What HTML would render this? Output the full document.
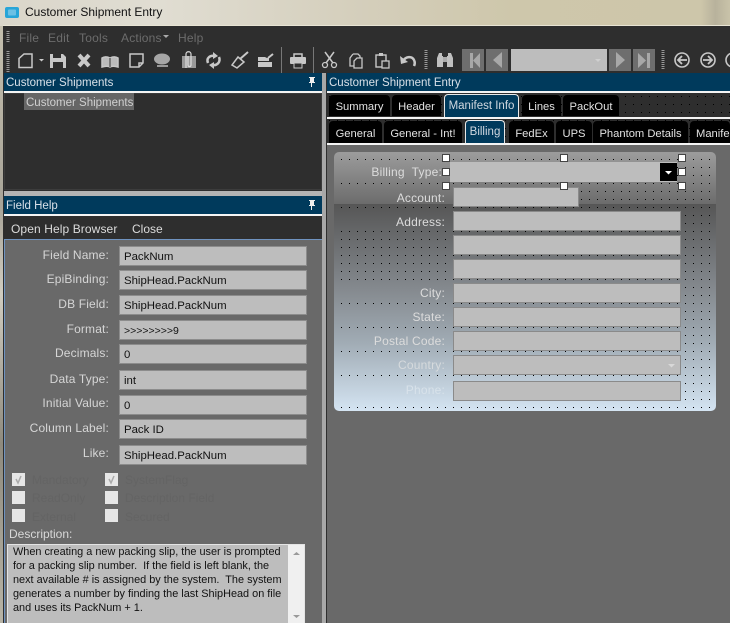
<!DOCTYPE html>
<html><head><meta charset="utf-8"><style>
html,body{margin:0;padding:0}
body{width:730px;height:623px;overflow:hidden;position:relative;background:#cdc6ab;font:11.5px "Liberation Sans",sans-serif;color:#d8d8d8}
div,span,svg{position:absolute}
.t{white-space:nowrap;line-height:14px}
.tab{background:#000;border-radius:4px 4px 0 0;height:21px;line-height:25px;text-align:center;color:#e2e2e2;white-space:nowrap;overflow:hidden;font-size:11.2px}
.r2{top:121px;height:22px;line-height:26px}
.sel{background:#003a5c;border:1px solid #e8e8e8;border-bottom:0;border-radius:4px 4px 0 0;box-sizing:border-box;line-height:22px;text-align:center;color:#d0d8e0;white-space:nowrap;font-size:11.5px}
.f{left:119px;width:188px;height:20px;background:#bdbdbd;border:1px solid #8c8c8c;box-sizing:border-box;color:#111;line-height:20px;padding-left:4px;white-space:nowrap;font-size:11.4px}
.l{left:0;width:109px;text-align:right;color:#d6d6d6;line-height:14px;white-space:nowrap;font-size:12px;letter-spacing:.15px}
.b{left:453px;width:228px;height:20px;background:#bdbdbd;border:1px solid #8a8a8a;box-sizing:border-box}
.c{width:13px;height:13px;background:#e6e6e6}
.k{color:#646464;white-space:nowrap;line-height:14px;font-size:12px}
.fl{left:339px;height:18px;width:109px;padding-right:3px;box-sizing:border-box;background-image:linear-gradient(#9c9c9c 0,#6c6c6c 52px,#565656 52px,#858a8f 138px,#a0abb4 190px,#d4e4f2 259px);background-size:100% 259px;background-repeat:no-repeat;text-align:right;line-height:18px;white-space:nowrap;font-size:12px;letter-spacing:.2px;color:#dcdcdc}
.h{width:8px;height:8px;background:#fff;border:1px solid #444;box-sizing:border-box}
.nav{top:49px;width:22px;height:22px;background:#6e6e6e}
.m{top:31px;color:#6c6c6c;font-size:12px;letter-spacing:.2px}
</style></head><body>
<div style="left:0;top:0;width:730px;height:26px;background:linear-gradient(90deg,#dad6ca 0,#e0ddd2 22%,#d4cebb 50%,#cec7ab 70%,#cdc6aa 96%,#b8b29c 98%,#c9c3a9 100%)"></div>
<div style="left:0;top:26px;width:4px;height:597px;background:linear-gradient(#c4bfae,#a8a498 30%,#d0ccc0 45%,#8e8a7e 70%,#b8b4a6)"></div>
<div style="left:3px;top:25px;width:727px;height:1px;background:#e8e4d4"></div>
<svg style="left:5px;top:7px" width="14" height="11"><rect x="0" y="0" width="14" height="11" rx="2" fill="#27a5d8"/><rect x="3" y="2.500" width="8" height="6" rx="1" fill="#6cc0e4"/></svg>
<div class="t" style="left:25px;top:5px;color:#111;font-size:12px">Customer Shipment Entry</div>

<div style="left:3px;top:26px;width:727px;height:597px;background:#2e2e2e"></div>
<div class="t m" style="left:19px">File</div>
<div class="t m" style="left:48px">Edit</div>
<div class="t m" style="left:79px">Tools</div>
<div class="t m" style="left:121px">Actions</div>
<div class="t m" style="left:178px">Help</div>

<svg style="left:0;top:26px" width="730" height="47" fill="none" stroke="#c8c8c8" stroke-width="2">
<g transform="translate(0,-26)">
<path d="M163 35h6l-3 3z" fill="#aaa" stroke="none"/>
<path d="M8 31v12M8 51v21M426 50v19M663 50v19" stroke="#999" stroke-dasharray="1 1" stroke-width="3" />
<path d="M281.500 47v26M313.500 47v26" stroke="#777" stroke-width="1"/>
<path d="M24 54h8v13.500h-13v-9z" stroke-width="1.500"/>
<path d="M39 59h5l-2.500 2.500z" fill="#ccc" stroke="none"/>
<path d="M50 54h13l3 3v11h-16z" fill="#c8c8c8" stroke="none"/><rect x="53" y="54" width="8" height="4" fill="#2e2e2e" stroke="none"/><rect x="53" y="62" width="10" height="6" fill="#2e2e2e" stroke="none"/>
<path d="M79 55l10 11M89 55l-10 11" stroke-width="4"/>
<path d="M102 67v-9c3-2 6-1 8 0 2-1 5-2 8 0v9c-3-1-6-1-8 0-2-1-5-1-8 0zM110 58v9" stroke-width="1.500" fill="#bbb"/><path d="M110 58v9" stroke="#2e2e2e" stroke-width="1"/>
<path d="M130 54h13v9l-4 4h-9zM143 63h-4v4" stroke-width="1.500"/>
<ellipse cx="162" cy="59" rx="8" ry="5.500" fill="#a6a6a6" stroke="none"/><path d="M157 66h11" stroke="#999" stroke-width="2"/>
<rect x="182" y="56" width="14" height="12" fill="#999" stroke="none"/><path d="M186 68v-14c0-3 5-3 5 0v11c0 2-3 2-3 0v-9" stroke-width="1.200" stroke="#ddd"/>
<path d="M208 63c-2-5 2-8 7-7M219 57c2 5-2 9-7 8" stroke-width="2.500"/><path d="M213 52l5 4-5 3zM214 62l-5 3 5 4z" fill="#c8c8c8" stroke="none"/>
<path d="M248 52l-8 7" stroke-width="2"/><path d="M238 57l6 5-7 6-5-3z" stroke-width="1.500"/>
<path d="M258 61v-4h7l2 1h2v3zM258 62h14v5h-14z" fill="#c8c8c8" stroke="none"/><path d="M268 58l5-4" stroke-width="2"/>
<path d="M294 54h8v4h-8z" stroke-width="1.500"/><rect x="290" y="57" width="16" height="7" rx="1" fill="#c8c8c8" stroke="none"/><rect x="294" y="63" width="8" height="5" fill="#2e2e2e" stroke="#c8c8c8" stroke-width="1"/>
<path d="M325 52l8 11M334 52l-8 11" stroke-width="1.500"/><circle cx="325" cy="65" r="2.500" stroke-width="1.300"/><circle cx="334" cy="65" r="2.500" stroke-width="1.300"/>
<path d="M353 54h5l2 2v2M353 54l-3 4v8h4" stroke-width="1.300"/><path d="M357 58h5v10h-8v-7z" stroke-width="1.300"/>
<rect x="376" y="55" width="10" height="12" stroke-width="1.400"/><rect x="379" y="53" width="4" height="3" fill="#c8c8c8" stroke="none"/><rect x="382" y="61" width="7" height="7" fill="#2e2e2e" stroke="#c8c8c8" stroke-width="1.300"/>
<path d="M403 61c3-5 9-5 11-1 1 2 1 4 0 6" stroke-width="2.500"/><path d="M400 56l1 8 7-2z" fill="#c8c8c8" stroke="none"/>
<path d="M439 53h3v3h1v11h-6v-9zM451 53h-3v3h-1v11h6v-9z" fill="#c0c0c0" stroke="none"/><rect x="443" y="57" width="4" height="5" fill="#aaa" stroke="none"/>
<circle cx="682" cy="60" r="7" stroke-width="1.600"/><path d="M687 60h-8M682 56l-4 4 4 4" stroke-width="1.800"/>
<circle cx="708" cy="60" r="7" stroke-width="1.600"/><path d="M703 60h8M708 56l4 4-4 4" stroke-width="1.800"/>
<circle cx="733" cy="60" r="7" stroke-width="1.600"/>
</g></svg>

<div class="nav" style="left:462px"></div><div class="nav" style="left:486px"></div>
<div style="left:511px;top:49px;width:96px;height:22px;background:#bdbdbd"></div>
<div class="nav" style="left:609px"></div><div class="nav" style="left:633px"></div>
<svg style="left:462px;top:49px" width="195" height="22" fill="#a8a8a8">
<path d="M8 4h3v15h-3zM18 4v15l-7-7.500zM40 3v16l-9-8z"/>
<path d="M133 10h6l-3 3z" fill="#d0d0d0"/>
<path d="M154 3v16l9-8zM176 4v15l8-7.500zM185 4h3v15h-3z"/>
</svg>

<!-- Left -->
<div style="left:4px;top:73px;width:318px;height:18px;background:#003a5c"></div>
<div class="t" style="left:6px;top:76px;color:#d8e0e8">Customer Shipments</div>
<div style="left:4px;top:91px;width:318px;height:2px;background:#f4f4f4"></div>
<svg style="left:308px;top:77px" width="8" height="11"><path d="M1 0h6v1h-1v4h1v1h-3v4h-1v-4h-2v-1h1v-4h-1z" fill="#eee"/></svg>
<div style="left:4px;top:93px;width:318px;height:97px;border:1px solid #3c3c3c;box-sizing:border-box"></div>
<div style="left:24px;top:93px;width:110px;height:17px;background:#666"></div>
<div class="t" style="left:26px;top:96px;color:#d0d0d0">Customer Shipments</div>
<div style="left:4px;top:191px;width:318px;height:5px;background:#b4b4b4"></div>
<div style="left:4px;top:196px;width:318px;height:18px;background:#003a5c"></div>
<div class="t" style="left:6px;top:199px;color:#d8e0e8">Field Help</div>
<div style="left:4px;top:214px;width:318px;height:2px;background:#f4f4f4"></div>
<svg style="left:308px;top:200px" width="8" height="11"><path d="M1 0h6v1h-1v4h1v1h-3v4h-1v-4h-2v-1h1v-4h-1z" fill="#eee"/></svg>
<div class="t" style="left:11px;top:222px;color:#dcdcdc;font-size:12px;letter-spacing:.1px">Open Help Browser</div>
<div class="t" style="left:132px;top:222px;color:#dcdcdc;font-size:12px">Close</div>
<div style="left:4px;top:239px;width:318px;height:384px;background:#696969;border-top:1px solid #6f93c0;border-left:1px solid #6f93c0;box-sizing:border-box"></div>

<div class="l" style="top:248px">Field Name:</div><div class="f" style="top:246px">PackNum</div>
<div class="l" style="top:272px">EpiBinding:</div><div class="f" style="top:270px">ShipHead.PackNum</div>
<div class="l" style="top:297px">DB Field:</div><div class="f" style="top:295px">ShipHead.PackNum</div>
<div class="l" style="top:322px">Format:</div><div class="f" style="top:320px;font-size:10.500px">&gt;&gt;&gt;&gt;&gt;&gt;&gt;&gt;9</div>
<div class="l" style="top:346px">Decimals:</div><div class="f" style="top:344px">0</div>
<div class="l" style="top:372px">Data Type:</div><div class="f" style="top:370px">int</div>
<div class="l" style="top:396px">Initial Value:</div><div class="f" style="top:395px">0</div>
<div class="l" style="top:421px">Column Label:</div><div class="f" style="top:419px">Pack ID</div>
<div class="l" style="top:446px">Like:</div><div class="f" style="top:445px">ShipHead.PackNum</div>

<div class="c" style="left:12px;top:473px"></div><div class="c" style="left:105px;top:473px"></div>
<svg style="left:12px;top:473px" width="110" height="13" fill="none" stroke="#aaa" stroke-width="1.500"><path d="M4 6l2 4 3-7M97 6l2 4 3-7"/></svg>
<div class="c" style="left:12px;top:491px"></div><div class="c" style="left:105px;top:491px"></div>
<div class="c" style="left:12px;top:509px"></div><div class="c" style="left:105px;top:509px"></div>
<div class="k" style="left:32px;top:473px">Mandatory</div><div class="k" style="left:125px;top:473px">SystemFlag</div>
<div class="k" style="left:32px;top:491px">ReadOnly</div><div class="k" style="left:125px;top:491px">Description Field</div>
<div class="k" style="left:32px;top:510px">External</div><div class="k" style="left:125px;top:510px">Secured</div>
<div class="t" style="left:9px;top:527px;color:#d8d8d8;font-size:12px">Description:</div>

<div style="left:7px;top:544px;width:298px;height:79px;background:#bdbdbd;border:1px solid #e4e4e4;border-bottom:0;box-sizing:border-box"></div>
<div style="left:288px;top:545px;width:16px;height:78px;background:#f0f0f0"></div>
<svg style="left:288px;top:545px" width="16" height="78"><path d="M5 10h7l-3.500-3zM5 70h7l-3.500 3z" fill="#9a9a9a"/></svg>
<div style="left:13px;top:545px;width:275px;font-size:10.900px;line-height:14px;color:#111;white-space:pre">When creating a new packing slip, the user is prompted
for a packing slip number.  If the field is left blank, the
next available # is assigned by the system.  The system
generates a number by finding the last ShipHead on file
and uses its PackNum + 1.</div>

<!-- Right -->
<div style="left:322px;top:73px;width:4px;height:550px;background:#a8a8a8"></div>
<div style="left:326px;top:73px;width:1px;height:550px;background:#2e2e2e"></div>
<div style="left:327px;top:73px;width:403px;height:18px;background:#003a5c"></div>
<div class="t" style="left:329px;top:76px;color:#d8e0e8">Customer Shipment Entry</div>
<div style="left:327px;top:91px;width:403px;height:2px;background:#f4f4f4"></div>
<div style="left:327px;top:117px;width:403px;height:2px;background:#f4f4f4"></div>
<div style="left:327px;top:143px;width:403px;height:2px;background:#f4f4f4"></div>
<div style="left:327px;top:145px;width:403px;height:478px;background:#696969"></div>
<svg style="left:327px;top:93px" width="403" height="50"><defs><pattern id="d" x="2" y="3" width="8" height="8" patternUnits="userSpaceOnUse"><rect width="1" height="1" fill="#000"/></pattern></defs><rect width="403" height="24" fill="url(#d)"/><rect y="26" width="403" height="24" fill="url(#d)"/></svg>

<div class="tab" style="left:329px;top:95px;width:61px">Summary</div>
<div class="tab" style="left:392px;top:95px;width:49px">Header</div>
<div class="sel" style="left:444px;top:94px;width:75px;height:23px">Manifest Info</div>
<div class="tab" style="left:522px;top:95px;width:39px">Lines</div>
<div class="tab" style="left:563px;top:95px;width:56px">PackOut</div>

<div class="tab r2" style="left:329px;width:53px">General</div>
<div class="tab r2" style="left:384px;width:78px">General - Int!</div>
<div class="sel" style="left:465px;top:120px;width:40px;height:23px">Billing</div>
<div class="tab r2" style="left:509px;width:45px">FedEx</div>
<div class="tab r2" style="left:556px;width:36px">UPS</div>
<div class="tab r2" style="left:593px;width:95px">Phantom Details</div>
<div class="tab r2" style="left:690px;width:40px;text-align:left;padding-left:6px;box-sizing:border-box">Manifest</div>

<!-- Form panel -->
<div style="left:334px;top:152px;width:382px;height:259px;border-radius:5px;overflow:hidden;background:linear-gradient(#9c9c9c 0,#6c6c6c 52px,#565656 52px,#858a8f 138px,#a0abb4 190px,#d4e4f2 259px)">
<svg style="left:0;top:0" width="382" height="259"><defs><pattern id="e" x="7" y="7" width="8" height="8" patternUnits="userSpaceOnUse"><rect width="1" height="1" fill="#000"/></pattern></defs><rect width="382" height="259" fill="url(#e)"/></svg>
</div>
<div class="fl" style="top:163px;background-position:0 -11px;padding-right:6px">Billing&nbsp; Type:</div>
<div class="fl" style="top:189px;background-position:0 -37px">Account:</div>
<div class="fl" style="top:213px;background-position:0 -61px">Address:</div>
<div class="fl" style="top:285px;background-position:0 -133px;line-height:17px">City:</div>
<div class="fl" style="top:309px;background-position:0 -157px;line-height:17px">State:</div>
<div class="fl" style="top:333px;background-position:0 -181px;line-height:17px">Postal Code:</div>
<div class="fl" style="top:357px;background-position:0 -205px;line-height:17px;color:#d6dadd">Country:</div>
<div class="fl" style="top:382px;background-position:0 -230px;line-height:17px;color:#d8e2ea">Phone:</div>

<div style="left:450px;top:162px;width:227px;height:20px;background:#bdbdbd"></div>
<div style="left:660px;top:163px;width:17px;height:18px;background:#000"></div>
<svg style="left:665px;top:171px" width="7" height="4"><path d="M0 0h7l-3.500 3.500z" fill="#fff"/></svg>
<div class="b" style="top:187px;width:126px"></div>
<div class="b" style="top:211px"></div>
<div class="b" style="top:235px"></div>
<div class="b" style="top:259px"></div>
<div class="b" style="top:283px"></div>
<div class="b" style="top:307px"></div>
<div class="b" style="top:331px"></div>
<div class="b" style="top:355px"></div>
<svg style="left:668px;top:364px" width="8" height="4"><path d="M0 0h7l-3.500 3.500z" fill="#d8d8d8"/></svg>
<div class="b" style="top:381px"></div>

<div class="h" style="left:442px;top:154px"></div><div class="h" style="left:560px;top:154px"></div><div class="h" style="left:678px;top:154px"></div>
<div class="h" style="left:442px;top:168px"></div><div class="h" style="left:678px;top:168px"></div>
<div class="h" style="left:442px;top:182px"></div><div class="h" style="left:560px;top:182px"></div><div class="h" style="left:678px;top:182px"></div>
</body></html>
